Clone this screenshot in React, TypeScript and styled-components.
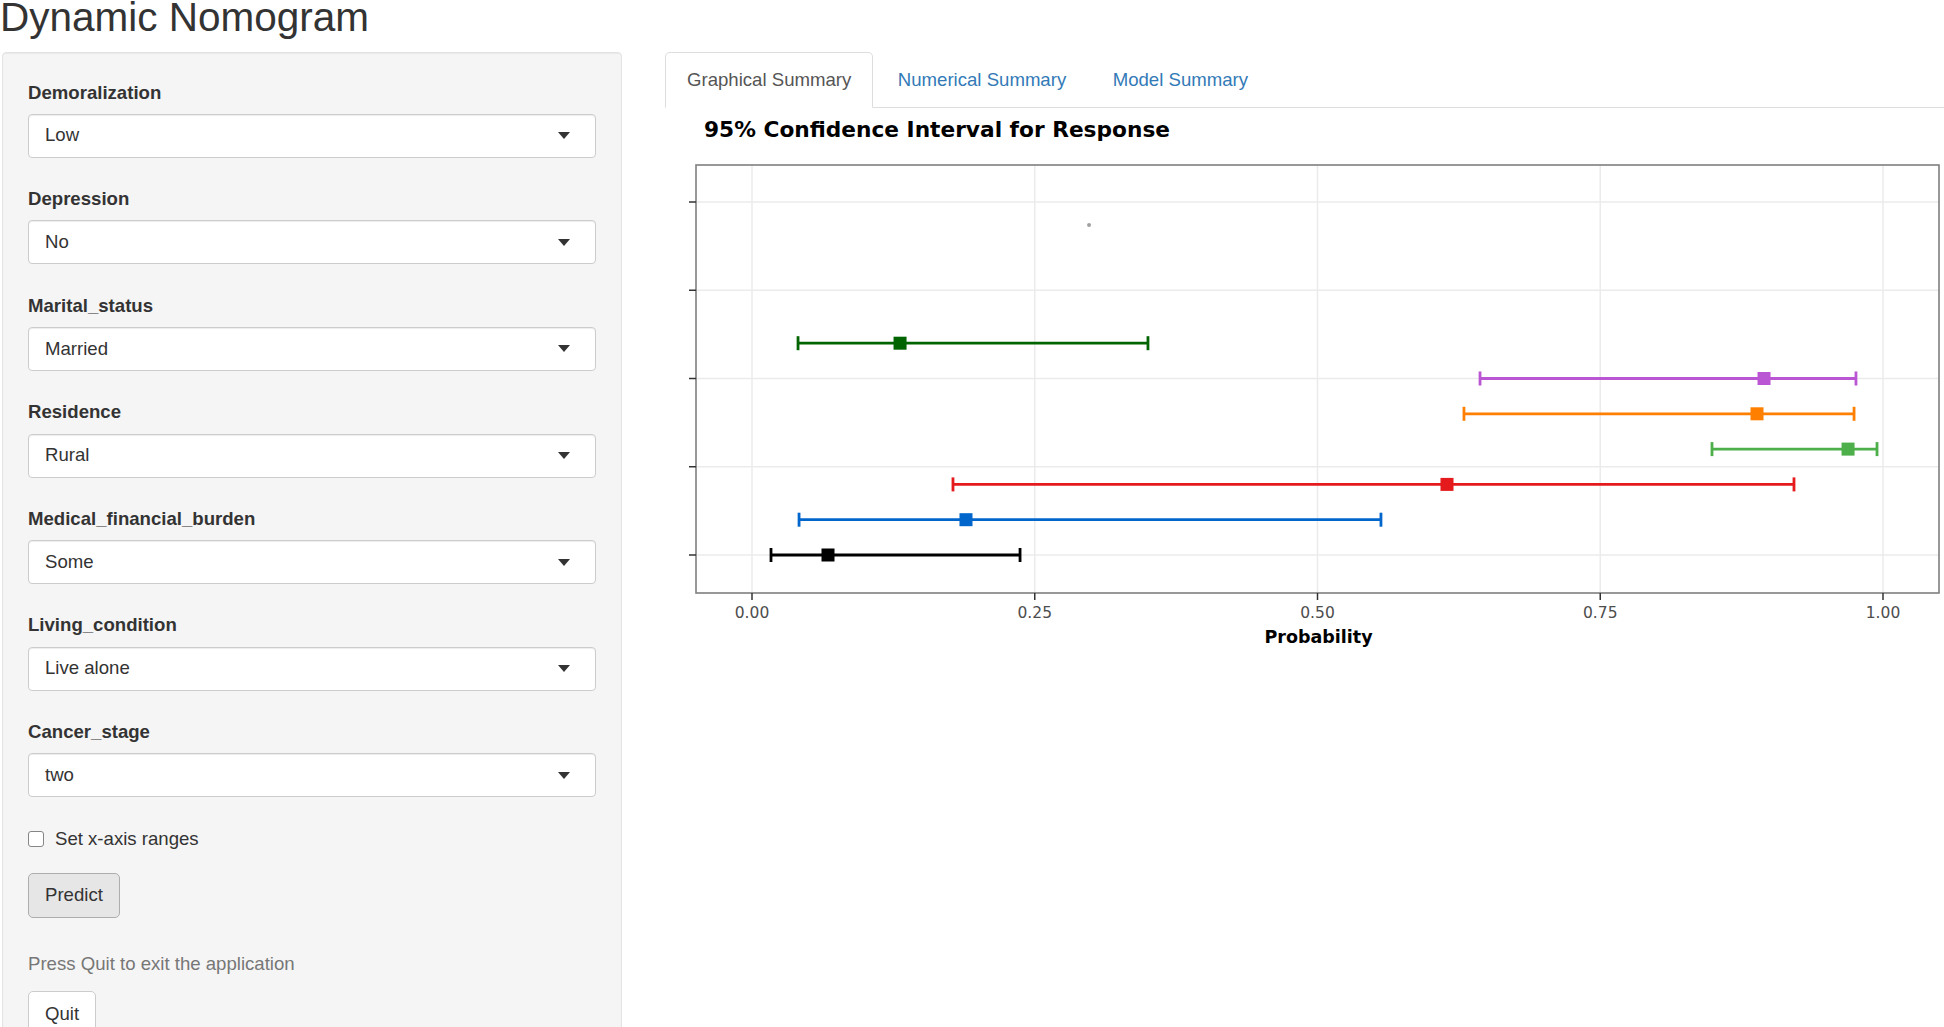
import React from 'react';
import styled, { createGlobalStyle } from 'styled-components';

const GlobalStyle = createGlobalStyle`
  body {
    margin: 0;
    background: #fff;
    color: #333;
    font-family: "Liberation Sans", Arial, sans-serif;
    font-size: 18.6px;
    line-height: 26.6px;
  }
  * { box-sizing: border-box; }
`;

const inputs = [
  { label: 'Demoralization', value: 'Low' },
  { label: 'Depression', value: 'No' },
  { label: 'Marital_status', value: 'Married' },
  { label: 'Residence', value: 'Rural' },
  { label: 'Medical_financial_burden', value: 'Some' },
  { label: 'Living_condition', value: 'Live alone' },
  { label: 'Cancer_stage', value: 'two' }
];

// estimate with lower / upper bound, top to bottom in the plot
const intervals = [
  { color: '#006400', lo: 0.0407, est: 0.1309, hi: 0.3501 },
  { color: '#BA55D3', lo: 0.6437, est: 0.8948, hi: 0.9761 },
  { color: '#FF7F00', lo: 0.6295, est: 0.8886, hi: 0.9744 },
  { color: '#4DAF4A', lo: 0.8488, est: 0.9691, hi: 0.9947 },
  { color: '#E41A1C', lo: 0.1777, est: 0.6145, hi: 0.9213 },
  { color: '#0066CC', lo: 0.0416, est: 0.1892, hi: 0.5561 },
  { color: '#000000', lo: 0.0168, est: 0.0672, hi: 0.237 }
];

const tabs = ['Graphical Summary', 'Numerical Summary', 'Model Summary'];

const X0 = 87;
const XW = 1131;
const px = (v: number) => X0 + v * XW;

const PANEL = { left: 31, right: 1274, top: 57, bottom: 485 };
const gridY = [0, 1, 2, 3, 4].map((i) => 94 + i * 88.25);
const ticks = [0, 0.25, 0.5, 0.75, 1];

const Caret = () => (
  <svg width="12" height="7" viewBox="0 0 12 7">
    <path d="M0 0 L12 0 L6 7 Z" fill="#333" />
  </svg>
);

const ConfidencePlot = () => (
  <PlotSvg width="1279" height="560" viewBox="0 0 1279 560">
    <text x="39" y="29" fontFamily="DejaVu Sans, sans-serif" fontWeight="bold" fontSize="21.7" fill="#000">
      95% Confidence Interval for Response
    </text>
    <rect
      x={PANEL.left}
      y={PANEL.top}
      width={PANEL.right - PANEL.left}
      height={PANEL.bottom - PANEL.top}
      fill="#fff"
    />
    {gridY.map((y) => (
      <line key={y} x1={PANEL.left} x2={PANEL.right} y1={y} y2={y} stroke="#EBEBEB" strokeWidth="1.5" />
    ))}
    {ticks.map((t) => (
      <line key={t} x1={px(t)} x2={px(t)} y1={PANEL.top} y2={PANEL.bottom} stroke="#EBEBEB" strokeWidth="1.5" />
    ))}
    <circle cx={px(0.298)} cy="117" r="2" fill="#a0a0a0" />
    {intervals.map((d, i) => {
      const y = 235.2 + i * 35.3;
      return (
        <g key={d.color}>
          <line x1={px(d.lo)} x2={px(d.hi)} y1={y} y2={y} stroke={d.color} strokeWidth="2.8" />
          <line x1={px(d.lo)} x2={px(d.lo)} y1={y - 7} y2={y + 7} stroke={d.color} strokeWidth="2.8" />
          <line x1={px(d.hi)} x2={px(d.hi)} y1={y - 7} y2={y + 7} stroke={d.color} strokeWidth="2.8" />
          <rect x={px(d.est) - 6.5} y={y - 6.5} width="13" height="13" fill={d.color} />
        </g>
      );
    })}
    <rect
      x={PANEL.left}
      y={PANEL.top}
      width={PANEL.right - PANEL.left}
      height={PANEL.bottom - PANEL.top}
      fill="none"
      stroke="#7F7F7F"
      strokeWidth="1.6"
    />
    {gridY.map((y) => (
      <line key={y} x1={PANEL.left - 7} x2={PANEL.left} y1={y} y2={y} stroke="#333" strokeWidth="1.5" />
    ))}
    {ticks.map((t) => (
      <g key={t}>
        <line x1={px(t)} x2={px(t)} y1={PANEL.bottom} y2={PANEL.bottom + 7} stroke="#333" strokeWidth="1.5" />
        <text
          x={px(t)}
          y="510"
          textAnchor="middle"
          fontFamily="DejaVu Sans, sans-serif"
          fontSize="15.5"
          fill="#4D4D4D"
        >
          {t.toFixed(2)}
        </text>
      </g>
    ))}
    <text
      x={(PANEL.left + PANEL.right) / 2 + 1}
      y="535"
      textAnchor="middle"
      fontFamily="DejaVu Sans, sans-serif"
      fontWeight="bold"
      fontSize="17.5"
      fill="#000"
    >
      Probability
    </text>
  </PlotSvg>
);

export default function App() {
  return (
    <Page>
      <GlobalStyle />
      <Title>Dynamic Nomogram</Title>
      <Layout>
        <Well>
          {inputs.map((input) => (
            <FormGroup key={input.label}>
              <Label>{input.label}</Label>
              <Select>
                <span>{input.value}</span>
                <Caret />
              </Select>
            </FormGroup>
          ))}
          <CheckRow>
            <CheckBox />
            Set x-axis ranges
          </CheckRow>
          <Button $active>Predict</Button>
          <HelpText>Press Quit to exit the application</HelpText>
          <Button>Quit</Button>
        </Well>
        <Main>
          <Tabs>
            {tabs.map((tab, i) => (
              <Tab key={tab} $active={i === 0}>
                {tab}
              </Tab>
            ))}
          </Tabs>
          <ConfidencePlot />
        </Main>
      </Layout>
    </Page>
  );
}

const Page = styled.div`
  width: 1944px;
`;

const Title = styled.h2`
  margin: -3px 0 0 0;
  height: 55px;
  font-size: 40.5px;
  line-height: 40px;
  font-weight: 400;
  color: #333;
`;

const Layout = styled.div`
  display: flex;
  align-items: flex-start;
`;

const Well = styled.div`
  width: 620px;
  margin-left: 2px;
  padding: 26.5px 25px 40px;
  background: #f5f5f5;
  border: 1px solid #e3e3e3;
  border-radius: 4px;
  box-shadow: inset 0 1px 1px rgba(0, 0, 0, 0.05);
`;

const FormGroup = styled.div`
  margin-bottom: 28.3px;
`;

const Label = styled.label`
  display: block;
  font-weight: bold;
  margin-bottom: 7.7px;
`;

const Select = styled.div`
  display: flex;
  align-items: center;
  justify-content: space-between;
  height: 44px;
  padding: 0 25px 0 16px;
  background: #fff;
  border: 1px solid #ccc;
  border-radius: 4px;
  box-shadow: inset 0 1px 1px rgba(0, 0, 0, 0.075);
`;

const CheckRow = styled.label`
  display: flex;
  align-items: center;
  gap: 11px;
  margin-top: 4.5px;
`;

const CheckBox = styled.span`
  width: 16px;
  height: 16px;
  background: #fff;
  border: 1px solid #858585;
  border-radius: 3px;
`;

const Button = styled.button<{ $active?: boolean }>`
  display: block;
  height: 45px;
  margin-top: ${(p) => (p.$active ? '20.5px' : '13.7px')};
  padding: 0 16px;
  font: inherit;
  color: #333;
  background: ${(p) => (p.$active ? '#e6e6e6' : '#fff')};
  border: 1px solid ${(p) => (p.$active ? '#adadad' : '#ccc')};
  border-radius: 5px;
`;

const HelpText = styled.div`
  margin-top: 33.5px;
  color: #777;
`;

const Main = styled.div`
  flex: 1;
  margin-left: 43px;
`;

const Tabs = styled.div`
  display: flex;
  border-bottom: 1px solid #ddd;
`;

const Tab = styled.div<{ $active?: boolean }>`
  margin-right: 2.5px;
  margin-bottom: -1px;
  padding: 0 21px;
  line-height: 54px;
  border: 1px solid ${(p) => (p.$active ? '#ddd' : 'transparent')};
  border-bottom-color: transparent;
  border-radius: 5px 5px 0 0;
  background: ${(p) => (p.$active ? '#fff' : 'transparent')};
  color: ${(p) => (p.$active ? '#555' : '#337ab7')};
`;

const PlotSvg = styled.svg`
  display: block;
`;
